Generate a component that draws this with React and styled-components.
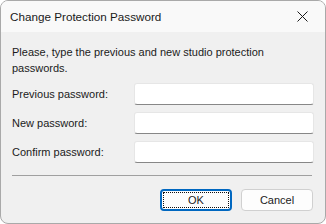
import React from "react";
import styled, { createGlobalStyle } from "styled-components";

const GlobalStyle = createGlobalStyle`
  html, body {
    margin: 0;
    padding: 0;
    background: #ffffff;
  }
  body {
    font-family: "Liberation Sans", Arial, sans-serif;
    font-size: 11px;
    color: #1b1b1b;
  }
  * {
    box-sizing: border-box;
  }
`;

const Window = styled.div`
  width: 326px;
  height: 224px;
  border: 1px solid #a9a9a9;
  border-radius: 8px;
  overflow: hidden;
  background: #f0f0f0;
  display: flex;
  flex-direction: column;
`;

const TitleBar = styled.div`
  height: 31px;
  flex: none;
  display: flex;
  align-items: center;
  justify-content: space-between;
  padding-left: 9px;
  background: #f9f9f9;
`;

const Title = styled.span`
  font-size: 11.7px;
  color: #1a1a1a;
`;

const CloseBtn = styled.div`
  width: 46px;
  height: 31px;
  display: flex;
  align-items: center;
  justify-content: center;
`;

const Body = styled.div`
  padding: 12px 11px 0 11px;
  display: flex;
  flex-direction: column;
`;

const Intro = styled.p`
  margin: 0;
  line-height: 16px;
  width: 300px;
`;

const Fields = styled.div`
  margin-top: 7px;
  display: grid;
  grid-template-columns: 122px 180px;
  row-gap: 7px;
  align-items: center;
`;

const Label = styled.label`
  line-height: 22px;
`;

const Input = styled.input`
  height: 22px;
  width: 180px;
  background: #ffffff;
  border: 1px solid #e6e6e6;
  border-bottom: 1px solid #878787;
  border-radius: 3px;
  padding: 0 4px;
  font: inherit;
  outline: none;
`;

const Separator = styled.div`
  margin-top: 12px;
  height: 1px;
  width: 300px;
  background: #a0a0a0;
`;

const Buttons = styled.div`
  margin-top: 13px;
  display: flex;
  justify-content: flex-end;
  gap: 9px;
  padding-right: 1px;
`;

const Button = styled.button`
  position: relative;
  width: 72px;
  height: 22px;
  padding: 0;
  font: inherit;
  color: #1b1b1b;
  background: #fdfdfd;
  border-radius: 4px;
  border: ${(p) => (p.primary ? "2px solid #0067c0" : "1px solid #d0d0d0")};
  &::after {
    content: "";
    display: ${(p) => (p.primary ? "block" : "none")};
    position: absolute;
    inset: 1px;
    border: 1px dotted #111;
  }
`;

const App = () => {
  return (
    <>
      <GlobalStyle />
      <Window>
        <TitleBar>
          <Title>Change Protection Password</Title>
          <CloseBtn>
            <svg width="11" height="11" viewBox="0 0 11 11">
              <path d="M0.5 0.5 L10.5 10.5 M10.5 0.5 L0.5 10.5" stroke="#1a1a1a" strokeWidth="1" />
            </svg>
          </CloseBtn>
        </TitleBar>
        <Body>
          <Intro>Please, type the previous and new studio protection passwords.</Intro>
          <Fields>
            <Label>Previous password:</Label>
            <Input type="password" />
            <Label>New password:</Label>
            <Input type="password" />
            <Label>Confirm password:</Label>
            <Input type="password" />
          </Fields>
          <Separator />
          <Buttons>
            <Button primary>OK</Button>
            <Button>Cancel</Button>
          </Buttons>
        </Body>
      </Window>
    </>
  );
};

export default App;
